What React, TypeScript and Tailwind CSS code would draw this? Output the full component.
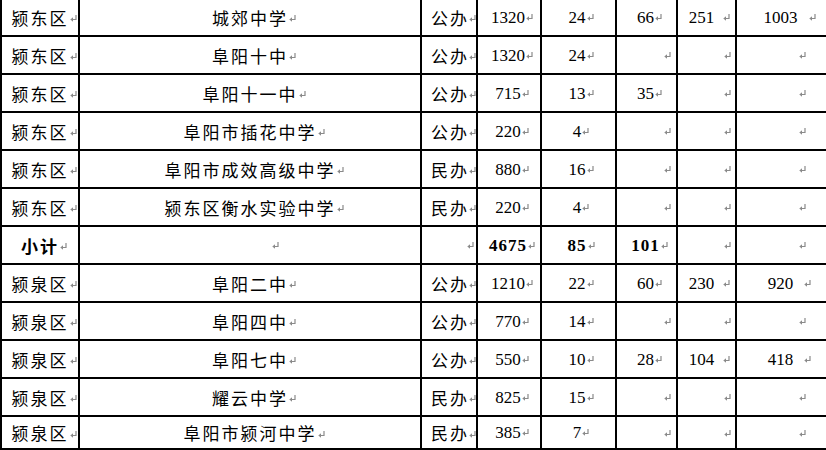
import React from 'react';

type Row = string[];

// '' = empty cell (only the paragraph mark is shown)
const rows: Row[] = [
  ['颍东区', '城郊中学', '公办', '1320', '24', '66', '251', '1003'],
  ['颍东区', '阜阳十中', '公办', '1320', '24', '', '', ''],
  ['颍东区', '阜阳十一中', '公办', '715', '13', '35', '', ''],
  ['颍东区', '阜阳市插花中学', '公办', '220', '4', '', '', ''],
  ['颍东区', '阜阳市成效高级中学', '民办', '880', '16', '', '', ''],
  ['颍东区', '颍东区衡水实验中学', '民办', '220', '4', '', '', ''],
  ['小计', '', '', '4675', '85', '101', '', ''],
  ['颍泉区', '阜阳二中', '公办', '1210', '22', '60', '230', '920'],
  ['颍泉区', '阜阳四中', '公办', '770', '14', '', '', ''],
  ['颍泉区', '阜阳七中', '公办', '550', '10', '28', '104', '418'],
  ['颍泉区', '耀云中学', '民办', '825', '15', '', '', ''],
  ['颍泉区', '阜阳市颍河中学', '民办', '385', '7', '', '', ''],
];

const cols = [
  { fill: 'justify-center pl-[8px]', empty: 'justify-center', gap: 'ml-[1px]' },
  { fill: 'justify-center pl-[8px]', empty: 'justify-start pl-[192px]', gap: 'ml-[1px]' },
  { fill: 'justify-start pl-[9px]', empty: 'justify-end pr-[2px]', gap: 'ml-[0px]' },
  { fill: 'justify-center pl-[6px]', empty: 'justify-end pr-[4px]', gap: 'ml-[1px]' },
  { fill: 'justify-center pl-[5px]', empty: 'justify-end pr-[4px]', gap: 'ml-[1px]' },
  { fill: 'justify-center pl-[6px]', empty: 'justify-end pr-[5px]', gap: 'ml-[1px]' },
  { fill: 'justify-center pl-[6px]', empty: 'justify-end pr-[4px]', gap: 'ml-[9px]' },
  { fill: 'justify-center pl-[16px]', empty: 'justify-end pr-[20px]', gap: 'ml-[11px]' },
];

const cjk = '[font-family:"Noto_Sans_CJK_SC","Noto_Sans",sans-serif]';
const serif = '[font-family:"Liberation_Serif","Noto_Sans_CJK_SC",serif]';

// Word style paragraph mark
const Mark: React.FC<{ className?: string }> = ({ className }) => (
  <svg width="7" height="7" viewBox="0 0 7 7" className={`shrink-0 ${className ?? ''}`}>
    <path d="M6 0 V4.5 H2" stroke="#8a8a8a" strokeWidth="1.2" fill="none" />
    <path d="M0.3 4.5 L3 2.2 L3 6.8 Z" fill="#8a8a8a" />
  </svg>
);

export default function App() {
  return (
    <div className="w-[826px] h-[450px] overflow-hidden bg-white">
      <div className="-mt-[1px] grid grid-cols-[76px_340px_54px_62px_73px_59px_57px_89px] grid-rows-[repeat(11,36px)_31px] gap-[2px] bg-black pl-[2px] pb-[2px]">
        {rows.map((row, r) => {
          const bold = row[0] === '小计';
          return row.map((text, c) => {
            const col = cols[c];
            const isNum = c >= 3;
            if (!text) {
              return (
                <div key={`${r}-${c}`} className={`flex items-center bg-white ${col.empty}`}>
                  <Mark className="mt-[1px]" />
                </div>
              );
            }
            return (
              <div
                key={`${r}-${c}`}
                className={`flex items-center whitespace-nowrap overflow-hidden bg-white text-black ${col.fill}`}
              >
                {isNum ? (
                  <span className={`${serif} text-[17px] leading-none ${bold ? 'font-bold tracking-[1px]' : ''}`}>
                    {text}
                  </span>
                ) : (
                  <span className={`${cjk} text-[17px] leading-none tracking-[2px] ${bold ? 'font-bold' : ''}`}>
                    {text}
                  </span>
                )}
                <Mark className={`${col.gap} ${isNum ? '' : 'mt-[3px]'}`} />
              </div>
            );
          });
        })}
      </div>
    </div>
  );
}
